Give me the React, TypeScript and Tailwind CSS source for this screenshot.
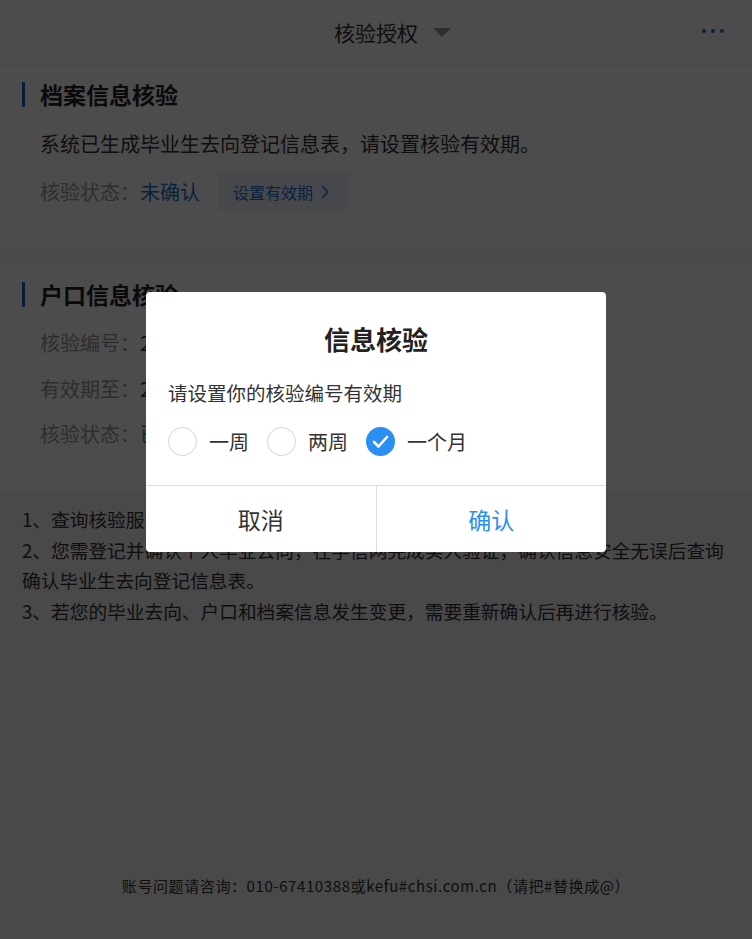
import { useState } from "react";

const options = ["一周", "两周", "一个月"];

function SectionTitle({ children }: { children: string }) {
  return (
    <div className="flex items-center h-[30px]">
      <span className="w-[3px] h-[25px] bg-[#1b5fb8] ml-[22px] mr-[15px]" />
      <span className="text-[23px] font-bold text-[#222] leading-[30px]">{children}</span>
    </div>
  );
}

export default function App() {
  const [periodo, setPeriodo] = useState(2);

  return (
    <div
      className="relative min-h-[939px] flex flex-col bg-[#f4f4f4] text-[#333]"
      style={{ fontFamily: '"Noto Sans CJK SC", "Liberation Sans", sans-serif' }}
    >
      {/* HEADER */}
      <div className="h-[65px] bg-white border-b border-[#eee] flex items-center justify-center relative">
        <div className="relative">
          <span className="text-[21px] text-[#333] leading-[30px]">核验授权</span>
          {/* seta para baixo ao lado do título */}
          <svg className="absolute left-[calc(100%+15px)] top-[11px]" width="18" height="10" viewBox="0 0 18 10">
            <polygon points="0,0 18,0 9,9" fill="#999" />
          </svg>
        </div>
        <div className="absolute right-[28px] top-[29px] flex gap-[5px]">
          <span className="w-[4px] h-[4px] rounded-full bg-[#2a6fd0]" />
          <span className="w-[4px] h-[4px] rounded-full bg-[#2a6fd0]" />
          <span className="w-[4px] h-[4px] rounded-full bg-[#2a6fd0]" />
        </div>
      </div>

      {/* ARQUIVO */}
      <div className="bg-white pt-[14px] pb-[39px]">
        <SectionTitle>档案信息核验</SectionTitle>
        <p className="mt-[20px] ml-[40px] text-[20px] leading-[30px] text-[#333]">
          系统已生成毕业生去向登记信息表，请设置核验有效期。
        </p>
        <div className="mt-[14px] ml-[40px] flex items-center h-[37px] text-[20px]">
          <span className="text-[#999]">核验状态：</span>
          <span className="text-[#2a6fd0]">未确认</span>
          <button className="ml-[18px] h-[37px] pl-[15px] pr-[19px] rounded-[3px] bg-[#eaf2fd] text-[#2a6fd0] text-[16px] flex items-center gap-[7px]">
            设置有效期
            <svg width="10" height="16" viewBox="0 0 10 16">
              <polyline points="2,2 8,8 2,14" fill="none" stroke="#2a6fd0" strokeWidth="1.5" />
            </svg>
          </button>
        </div>
      </div>

      {/* HUKOU */}
      <div className="bg-white mt-[15px] pt-[15px] pb-[42px]">
        <SectionTitle>户口信息核验</SectionTitle>
        <div className="mt-[19px] ml-[40px] flex flex-col gap-[15.5px] text-[20px] leading-[30px]">
          <div>
            <span className="text-[#999]">核验编号：</span>
            <span className="text-[#333]">2H8K3XQ7PMN4T6RA</span>
          </div>
          <div>
            <span className="text-[#999]">有效期至：</span>
            <span className="text-[#333]">2024-07-15</span>
          </div>
          <div>
            <span className="text-[#999]">核验状态：</span>
            <span className="text-[#2f9a3a]">已确认</span>
          </div>
        </div>
      </div>

      {/* NOTAS */}
      <div className="px-[22px] pt-[13px] text-[18.7px] leading-[30.5px] text-[#333]">
        <p>1、查询核验服务仅限本人毕业去向登记信息核验使用。</p>
        <p>2、您需登记并确认个人毕业去向，在学信网完成实人验证，确认信息安全无误后查询确认毕业生去向登记信息表。</p>
        <p>3、若您的毕业去向、户口和档案信息发生变更，需要重新确认后再进行核验。</p>
      </div>

      {/* RODAPÉ */}
      <div className="mt-auto pb-[43px] text-center text-[15px] leading-[20px] tracking-[0.6px] text-[#333]">
        账号问题请咨询：010-67410388或kefu#chsi.com.cn（请把#替换成@）
      </div>

      {/* OVERLAY + MODAL */}
      <div className="absolute inset-0 bg-black/70 flex justify-center pt-[292px]">
        <div className="w-[460px] h-fit bg-white rounded-[4px] overflow-hidden">
          <div className="pt-[29px] text-center text-[26px] font-bold leading-[36px] text-[#222]">信息核验</div>
          <p className="mt-[22px] px-[22px] text-[19.5px] leading-[28px] text-[#333]">请设置你的核验编号有效期</p>
          <div className="mt-[20px] px-[22px] pb-[29px] flex items-center">
            {options.map((op, i) => (
              <button
                key={op}
                onClick={() => setPeriodo(i)}
                className="flex items-center gap-[12px] mr-[18px]"
              >
                {periodo === i ? (
                  <svg width="29" height="29" viewBox="0 0 29 29">
                    <circle cx="14.5" cy="14.5" r="14.5" fill="#2b8ef3" />
                    <polyline points="8,15 12.5,19.5 21,10" fill="none" stroke="#fff" strokeWidth="2.6" strokeLinecap="round" strokeLinejoin="round" />
                  </svg>
                ) : (
                  <span className="w-[29px] h-[29px] rounded-full border border-[#d3d3d3]" />
                )}
                <span className="text-[20px] leading-[29px] text-[#333]">{op}</span>
              </button>
            ))}
          </div>
          <div className="flex border-t border-[#ddd] h-[67px]">
            <button className="flex-1 border-r border-[#ddd] text-[23px] text-[#333]">取消</button>
            <button className="flex-1 text-[23px] text-[#2b8ef3]">确认</button>
          </div>
        </div>
      </div>
    </div>
  );
}
